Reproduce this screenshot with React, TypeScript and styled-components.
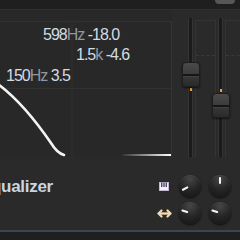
import styled, { createGlobalStyle } from 'styled-components';

const GlobalStyle = createGlobalStyle`
  html, body {
    margin: 0;
    padding: 0;
    background: #2a2a2a;
    overflow: hidden;
  }
  * {
    box-sizing: border-box;
  }
  svg {
    display: block;
  }
`;

const Device = styled.div`
  width: 240px;
  height: 240px;
  display: flex;
  flex-direction: column;
  background: #2a2a2a;
  font-family: 'Liberation Sans', Arial, sans-serif;
  overflow: hidden;
`;

const TopBar = styled.div`
  height: 10px;
  flex: none;
  display: flex;
  justify-content: flex-end;
  background: #1f1f1f;
  border-bottom: 1px solid #2f2f2f;
  padding-right: 5px;
`;

const TopButton = styled.div`
  width: 20px;
  height: 4px;
  border-radius: 0 0 8px 8px;
  background: #565656;
`;

const Main = styled.div`
  height: 147px;
  flex: none;
  display: flex;
`;

const GraphColumn = styled.div`
  width: 172px;
  display: flex;
  flex-direction: column;
`;

const GraphHeader = styled.div`
  height: 11px;
  background: #282828;
`;

const Plot = styled.div`
  position: relative;
  flex: 1;
  background: #282828;
  border-top: 1px solid #303030;
  border-right: 1px solid #353535;
`;

const Label = styled.div<{ $x: number; $y: number }>`
  position: absolute;
  left: ${(p) => p.$x}px;
  top: ${(p) => p.$y}px;
  font-size: 16px;
  line-height: 16px;
  letter-spacing: -1px;
  white-space: nowrap;
  color: #d3dbe3;
`;

const Unit = styled.span`
  color: #8d98a2;
`;

const FaderSection = styled.div`
  flex: 1;
  display: flex;
  padding: 8px 0 0 16px;
`;

const Channel = styled.div`
  width: 30px;
  flex: none;
  display: flex;
  gap: 2px;
`;

const Groove = styled.div`
  position: relative;
  width: 5px;
  flex: none;
  background: #1b1b1b;
  border-left: 1px solid #343434;
  border-right: 1px solid #343434;
`;

const Meter = styled.div`
  width: 21px;
  flex: none;
  margin-top: 2px;
  border: 1px solid #343434;
  border-bottom: none;
  padding-top: 34px;
`;

const Dash = styled.div`
  border-top: 1px dashed #3a3a3a;
`;

const Cap = styled.div<{ $top: number }>`
  position: absolute;
  left: -7px;
  top: ${(p) => p.$top}px;
  width: 18px;
  height: 25px;
  border-radius: 4px 4px 3px 3px;
  border: 1px solid #1d1d1d;
  background: linear-gradient(#4a4a4a 0%, #3c3c3c 48%, #161616 48%, #161616 56%, #4a4a4a 56%, #363636 62%, #2a2a2a 100%);
  box-shadow: 0 1px 2px rgba(0, 0, 0, 0.6);
`;

const Marker = styled.div<{ $top: number }>`
  position: absolute;
  left: 1px;
  top: ${(p) => p.$top}px;
  width: 2px;
  height: 3px;
  background: #e8a23a;
`;

const Bottom = styled.div`
  height: 73px;
  flex: none;
  display: flex;
  justify-content: space-between;
`;

const Title = styled.div`
  margin: 21px 0 0 -20px;
  font-size: 17px;
  line-height: 17px;
  font-weight: bold;
  letter-spacing: -0.3px;
  color: #c9d5e0;
`;

const Controls = styled.div`
  display: grid;
  grid-template-columns: 14px 22px 22px;
  grid-template-rows: 22px 22px;
  column-gap: 8px;
  row-gap: 5px;
  padding: 18px 9px 0 0;
  align-items: center;
  justify-items: center;
`;

const KnobBody = styled.div`
  position: relative;
  width: 22px;
  height: 22px;
  border-radius: 50%;
  background: radial-gradient(circle at 50% 18%, #464646 0%, #262626 50%, #141414 100%);
  box-shadow: 0 1px 2px rgba(0, 0, 0, 0.7), inset 0 1px 0 rgba(255, 255, 255, 0.06);
`;

const Pointer = styled.div<{ $angle: number }>`
  position: absolute;
  left: 10px;
  top: 2px;
  width: 2px;
  height: 7px;
  transform-origin: 1px 9px;
  transform: rotate(${(p) => p.$angle}deg);
  background: #f4f4f4;
  border-radius: 1px;
`;

const Footer = styled.div`
  flex: 1;
  border-top: 2px solid #3a4650;
  background: #1f1f1f;
`;

function Knob({ angle }: { angle: number }) {
  return (
    <KnobBody>
      <Pointer $angle={angle} />
    </KnobBody>
  );
}

function PianoIcon() {
  return (
    <svg width="10" height="9" viewBox="0 0 10 9">
      <rect x="0.5" y="0.5" width="9" height="8" fill="#f2f2f6" stroke="#c8b8d8" strokeWidth="1" />
      <rect x="2" y="0.5" width="1.4" height="4.5" fill="#4a4a5a" />
      <rect x="4.3" y="0.5" width="1.4" height="4.5" fill="#4a4a5a" />
      <rect x="6.6" y="0.5" width="1.4" height="4.5" fill="#4a4a5a" />
    </svg>
  );
}

function StretchIcon() {
  return (
    <svg width="15" height="9" viewBox="0 0 15 9">
      <path d="M1.5 4.5 H13.5 M4.5 1.5 L1.5 4.5 L4.5 7.5 M10.5 1.5 L13.5 4.5 L10.5 7.5" fill="none" stroke="#e3a85a" strokeWidth="2.4" strokeLinecap="round" strokeLinejoin="round" />
      <path d="M1.5 4.5 H13.5 M4.5 1.5 L1.5 4.5 L4.5 7.5 M10.5 1.5 L13.5 4.5 L10.5 7.5" fill="none" stroke="#cfe0f0" strokeWidth="1.6" strokeLinecap="round" strokeLinejoin="round" />
    </svg>
  );
}

function Curve() {
  return (
    <svg width="171" height="135" viewBox="0 0 171 135">
      <defs>
        <linearGradient id="fade" x1="122" x2="171" y1="0" y2="0" gradientUnits="userSpaceOnUse">
          <stop offset="0" stopColor="#ffffff" stopOpacity="0.05" />
          <stop offset="1" stopColor="#ffffff" stopOpacity="1" />
        </linearGradient>
      </defs>
      <line x1="72" y1="0" x2="72" y2="135" stroke="#313131" strokeWidth="1" />
      <line x1="0" y1="66.5" x2="171" y2="66.5" stroke="#313131" strokeWidth="1" />
      <path d="M-2 62 C 18 77, 36 99, 51 121 Q 57 131, 64 133" fill="none" stroke="#f4f4f4" strokeWidth="2.6" strokeLinecap="round" />
      <rect x="122" y="132" width="49" height="2" fill="url(#fade)" />
    </svg>
  );
}

export default function App() {
  const faders = [
    { cap: 44, marker: 70 },
    { cap: 75, marker: 71 },
  ];

  return (
    <>
      <GlobalStyle />
      <Device>
        <TopBar>
          <TopButton />
        </TopBar>
        <Main>
          <GraphColumn>
            <GraphHeader />
            <Plot>
              <Curve />
              <Label $x={43} $y={5}>
                598<Unit>Hz</Unit> -18.0
              </Label>
              <Label $x={76} $y={25}>
                1.5<Unit>k</Unit> -4.6
              </Label>
              <Label $x={6} $y={46}>
                150<Unit>Hz</Unit> 3.5
              </Label>
            </Plot>
          </GraphColumn>
          <FaderSection>
            {faders.map((f, i) => (
              <Channel key={i}>
                <Groove>
                  <Marker $top={f.marker} />
                  <Cap $top={f.cap} />
                </Groove>
                <Meter>
                  <Dash />
                </Meter>
              </Channel>
            ))}
          </FaderSection>
        </Main>
        <Bottom>
          <Title>Equalizer</Title>
          <Controls>
            <PianoIcon />
            <Knob angle={-118} />
            <Knob angle={0} />
            <StretchIcon />
            <Knob angle={-72} />
            <Knob angle={-72} />
          </Controls>
        </Bottom>
        <Footer />
      </Device>
    </>
  );
}
